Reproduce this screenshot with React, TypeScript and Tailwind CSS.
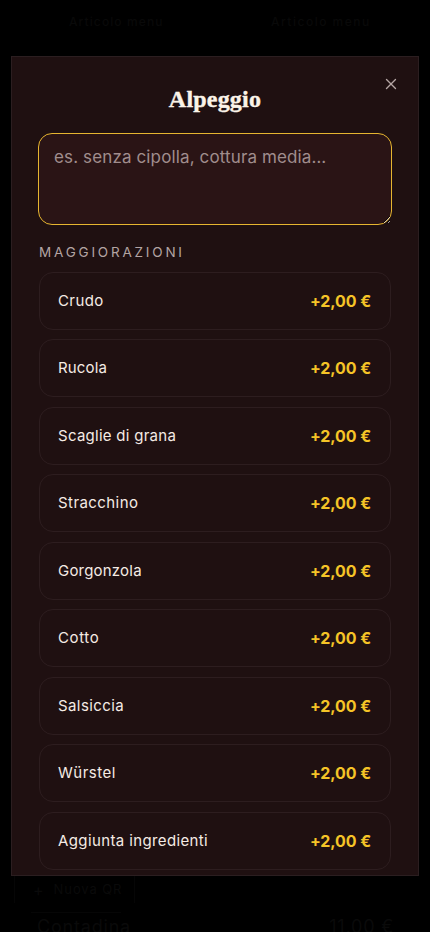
import { X } from "lucide-react";

const extras = [
  { name: "Crudo", spacing: "tracking-[0.4px]" },
  { name: "Rucola", spacing: "tracking-[0.15px]" },
  { name: "Scaglie di grana", spacing: "tracking-[0.27px]" },
  { name: "Stracchino", spacing: "tracking-[0.43px]" },
  { name: "Gorgonzola", spacing: "tracking-[0.2px]" },
  { name: "Cotto", spacing: "tracking-[0.6px]" },
  { name: "Salsiccia", spacing: "tracking-[0.4px]" },
  { name: "Würstel", spacing: "tracking-[0.5px]" },
  { name: "Aggiunta ingredienti", spacing: "tracking-[0.38px]" },
];

export default function App() {
  return (
    <div className="relative h-[932px] w-[430px] overflow-hidden bg-black font-['Inter',sans-serif]">
      <div className="flex h-[56px] pt-[14px] text-[12px] leading-4 font-medium tracking-[1.1px] text-[#090909]">
        <span className="ml-[69px] w-[202px]">Articolo menu</span>
        <span className="tracking-[1.5px]">Articolo menu</span>
      </div>
      <main className="relative mx-[11px] h-[820px] overflow-hidden border border-[#2b1e20] bg-[#1f1011] px-[27px]">
        <button aria-label="Chiudi" className="absolute top-[18px] right-[18px] text-[#b5a6a4]">
          <X size={18} strokeWidth={1.8} />
        </button>
        <h2 className="mt-[26px] text-center font-['Liberation_Serif',serif] text-[24px] leading-8 font-bold tracking-[0.2px] text-[#fbf3e8] [-webkit-text-stroke:0.4px_#fbf3e8]">
          Alpeggio
        </h2>
        <textarea
          placeholder="es. senza cipolla, cottura media…"
          className="-mx-px mt-[18px] block h-[92px] w-[354px] resize rounded-[14px] border border-[#e6b530] bg-[#2a1415] px-[15px] py-[9px] text-[17px] leading-7 tracking-[0.13px] text-white outline-none placeholder:text-[#a08d8d]"
        />
        <h3 className="mt-[17px] text-[13.5px] leading-5 tracking-[2.8px] text-[#b3a4a3]">MAGGIORAZIONI</h3>
        <ul className="mt-[9.75px] flex flex-col gap-[9.5px]">
          {extras.map((e) => (
            <li key={e.name} className="flex h-[58px] shrink-0 items-center justify-between rounded-[14px] border border-[#2d1d1f] pr-[19px] pl-[18px] text-[15px]">
              <span className={"text-[#f5ebe4] " + e.spacing}>{e.name}</span>
              <span className="text-[16px] font-bold tracking-[-0.1px] text-[#f5c427]">+2,00 €</span>
            </li>
          ))}
        </ul>
      </main>
      <div className="px-[14px] text-[#0a0a0a]">
        <div className="flex h-[27px] w-[121px] items-center border-x border-[#060606] pl-[18px] text-[13px]">
          <span className="text-[16px]">+</span>
          <span className="ml-[10px] tracking-[0.9px]">Nuova QR</span>
        </div>
        <div className="mt-[9px] ml-[17px] w-[90px] border-t border-[#060606]" />
        <div className="mt-[2px] flex justify-between pr-[22px] pl-[23px] text-[18px] leading-6 tracking-[0.8px]">
          <span>Contadina</span>
          <span>11,00 €</span>
        </div>
      </div>
    </div>
  );
}
